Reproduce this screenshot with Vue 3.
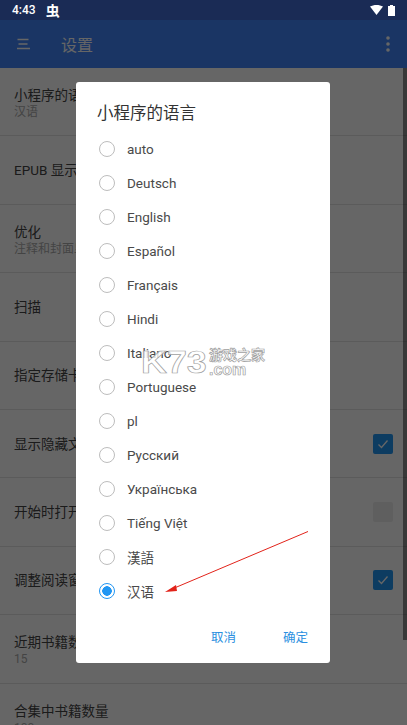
<template>
  <div class="phone">
    <div class="status">
      <span class="time">4:43</span>
      <span class="bug">虫</span>
      <span class="status-space"></span>
      <svg width="13" height="10" viewBox="0 0 13 10"><path d="M0 1.6C1.8.5 4 0 6.5 0S11.200.5 13 1.600L6.500 10z" fill="#fff" /></svg>
      <svg class="battery" width="7" height="11" viewBox="0 0 7 11"><path d="M2 0h3v1h2v10H0V1h2z" fill="#fff" /></svg>
    </div>
    <header class="appbar">
      <svg width="15" height="12" viewBox="0 0 15 12"><path d="M1.500 1.500h11M2.500 6h9M1 10.500h13" stroke="#fff" stroke-width="1.300" fill="none" /></svg>
      <span class="appbar-title">设置</span>
      <span class="status-space"></span>
      <svg width="4" height="16" viewBox="0 0 4 16"><circle cx="2" cy="2" r="1.800" fill="#fff" /><circle cx="2" cy="8" r="1.800" fill="#fff" /><circle cx="2" cy="14" r="1.800" fill="#fff" /></svg>
    </header>

    <div class="list">
      <div v-for="row in rows" :key="row.title" class="row">
        <div class="row-text" :class="{ double: row.sub }">
          <div class="row-title">{{ row.title }}</div>
          <div v-if="row.sub" class="row-sub">{{ row.sub }}</div>
        </div>
        <span v-if="row.check === true" class="check on">
          <svg width="14" height="14" viewBox="0 0 14 14"><path d="M2.500 7.500l3 3 6-7" stroke="#fff" stroke-width="1.300" fill="none" /></svg>
        </span>
        <span v-else-if="row.check === false" class="check"></span>
      </div>
    </div>
    <div class="scrollbar"></div>

    <div class="scrim">
      <div class="dialog">
        <div class="dialog-title">小程序的语言</div>
        <div class="options">
          <div v-for="lang in languages" :key="lang" class="option">
            <span class="radio" :class="{ selected: lang === current }"></span>
            <span>{{ lang }}</span>
          </div>
        </div>
        <div class="actions">
          <span>取消</span>
          <span>确定</span>
        </div>
      </div>
    </div>

    <svg class="arrow" width="407" height="725" viewBox="0 0 407 725">
      <path d="M308 531.500L172 589" stroke="#e2231a" stroke-width="1" fill="none" />
      <path d="M165 592L176 585 177 591z" fill="#e2231a" />
    </svg>

    <div class="watermark">
      <span class="wm-logo">K73</span>
      <div class="wm-side">
        <span class="wm-name">游戏之家</span>
        <span class="wm-com">.com</span>
      </div>
    </div>
  </div>
</template>

<script setup>
const current = '汉语'

const rows = [
  { title: '小程序的语言', sub: '汉语' },
  { title: 'EPUB 显示' },
  { title: '优化', sub: '注释和封面显示' },
  { title: '扫描' },
  { title: '指定存储卡' },
  { title: '显示隐藏文件', check: true },
  { title: '开始时打开', check: false },
  { title: '调整阅读窗口', check: true },
  { title: '近期书籍数量', sub: '15' },
  { title: '合集中书籍数量', sub: '100' }
]

const languages = [
  'auto', 'Deutsch', 'English', 'Español', 'Français', 'Hindi', 'Italiano',
  'Portuguese', 'pl', 'Русский', 'Українська', 'Tiếng Việt', '漢語', '汉语'
]
</script>

<style>
html, body {
  margin: 0;
  background: #fff;
}
</style>

<style scoped>
.phone {
  position: relative;
  width: 407px;
  height: 725px;
  overflow: hidden;
  background: #fff;
  font-family: Roboto, "Noto Sans CJK SC", sans-serif;
}
.status {
  position: relative;
  z-index: 3;
  height: 20px;
  display: flex;
  align-items: center;
  padding: 0 12px 0 12px;
  background: #1a2b55;
  color: #fff;
  font-size: 12px;
  font-weight: 500;
}
.bug {
  margin-left: 10px;
  font-size: 14px;
  font-weight: 700;
}
.status-space {
  flex: 1;
}
.battery {
  margin-left: 5px;
}
.appbar {
  height: 48px;
  display: flex;
  align-items: center;
  padding: 0 17px 0 16px;
  background: #4386f9;
  color: #fff;
}
.appbar-title {
  margin-left: 30px;
  font-size: 16px;
}
.list {
  display: flex;
  flex-direction: column;
}
.row {
  box-sizing: border-box;
  height: 68.4px;
  flex: none;
  display: flex;
  align-items: center;
  justify-content: space-between;
  padding: 0 14px;
  border-bottom: 1px solid #e4e4e4;
}
.row-text.double {
  padding-top: 3px;
}
.row-title {
  font-size: 13.5px;
  line-height: 18px;
  color: #444;
}
.row-sub {
  font-size: 12px;
  line-height: 16px;
  color: #aaa;
}
.check {
  box-sizing: border-box;
  width: 20px;
  height: 20px;
  border-radius: 2px;
  background: #eeeeee;
  display: flex;
  align-items: center;
  justify-content: center;
}
.check.on {
  background: #2196f3;
}
.scrollbar {
  position: absolute;
  right: 0;
  top: 68px;
  width: 4px;
  height: 572px;
  background: rgba(0, 0, 0, 0.45);
}
.scrim {
  position: absolute;
  inset: 20px 0 0 0;
  z-index: 1;
  box-sizing: border-box;
  padding: 62px 0 0 76px;
  background: rgba(0, 0, 0, 0.6);
}
.dialog {
  box-sizing: border-box;
  width: 254px;
  height: 581px;
  padding: 20px 0 0 0;
  background: #fff;
  border-radius: 3px;
}
.dialog-title {
  margin-left: 21px;
  font-size: 16.500px;
  line-height: 24px;
  color: #333;
}
.options {
  margin-top: 6px;
  padding-left: 23px;
}
.option {
  height: 34px;
  display: flex;
  align-items: center;
  gap: 12px;
  font-size: 13.500px;
  color: #4a4a4a;
}
.radio {
  box-sizing: border-box;
  width: 16px;
  height: 16px;
  border: 1.500px solid #bdbdbd;
  border-radius: 50%;
}
.radio.selected {
  border-color: #2196f3;
  background: radial-gradient(circle, #2196f3 0 4.500px, #fff 5px);
}
.actions {
  display: flex;
  justify-content: flex-end;
  gap: 47px;
  margin-top: 21px;
  padding-right: 22px;
  font-size: 12.500px;
  line-height: 18px;
  color: #2b8fe0;
}
.arrow {
  position: absolute;
  left: 0;
  top: 0;
  z-index: 2;
}
.watermark {
  position: absolute;
  left: 141px;
  top: 347px;
  z-index: 2;
  display: flex;
  color: rgba(255, 255, 255, 0.8);
  -webkit-text-stroke: 0.7px #a0a0a0;
  font-family: "Liberation Sans", "Noto Sans CJK SC", sans-serif;
  font-weight: 700;
}
.wm-logo {
  width: 68px;
  font-size: 32px;
  line-height: 30px;
  transform: scaleX(1.12);
  transform-origin: left center;
}
.wm-side {
  display: flex;
  flex-direction: column;
}
.wm-name {
  font-size: 14px;
  line-height: 16px;
}
.wm-com {
  font-size: 16px;
  line-height: 13px;
}
</style>
